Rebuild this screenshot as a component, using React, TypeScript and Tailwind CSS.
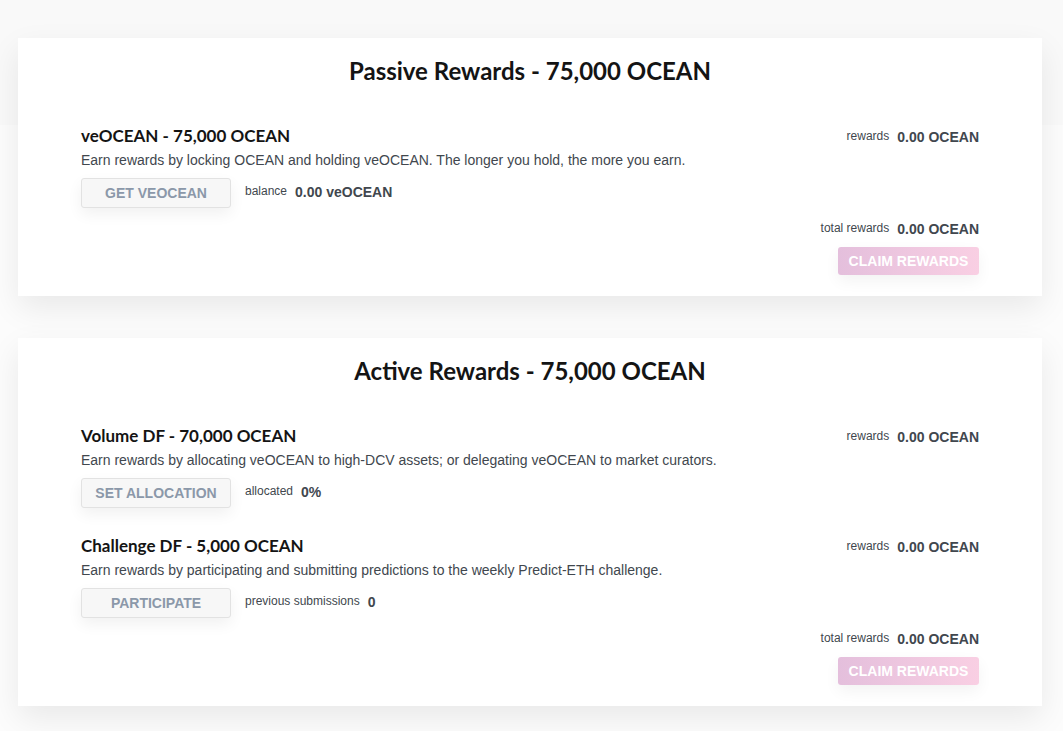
import React from 'react';

interface Stat {
    label: string;
    value: string;
}

interface Stream {
    title: string;
    description: string;
    action: string;
    stat: Stat;
    rewards: string;
}

interface Section {
    title: string;
    streams: Stream[];
    total: string;
}

const SECTIONS: Section[] = [
    {
        title: 'Passive Rewards - 75,000 OCEAN',
        streams: [
            {
                title: 'veOCEAN - 75,000 OCEAN',
                description: 'Earn rewards by locking OCEAN and holding veOCEAN. The longer you hold, the more you earn.',
                action: 'Get veOCEAN',
                stat: { label: 'balance', value: '0.00 veOCEAN' },
                rewards: '0.00 OCEAN',
            },
        ],
        total: '0.00 OCEAN',
    },
    {
        title: 'Active Rewards - 75,000 OCEAN',
        streams: [
            {
                title: 'Volume DF - 70,000 OCEAN',
                description: 'Earn rewards by allocating veOCEAN to high-DCV assets; or delegating veOCEAN to market curators.',
                action: 'Set Allocation',
                stat: { label: 'allocated', value: '0%' },
                rewards: '0.00 OCEAN',
            },
            {
                title: 'Challenge DF - 5,000 OCEAN',
                description: 'Earn rewards by participating and submitting predictions to the weekly Predict-ETH challenge.',
                action: 'Participate',
                stat: { label: 'previous submissions', value: '0' },
                rewards: '0.00 OCEAN',
            },
        ],
        total: '0.00 OCEAN',
    },
];

const headingFont = "font-['Lato','Inter',sans-serif]";

function StatLine({ label, value }: Stat) {
    return (
        <div className="flex items-start gap-2">
            <span className="text-[12px] leading-[18px] text-[#41474e]">{label}</span>
            <span className="text-[14px] font-bold leading-[20px] text-[#41474e]">{value}</span>
        </div>
    );
}

function StreamRow({ stream }: { stream: Stream }) {
    return (
        <div className="flex items-start justify-between">
            <div>
                <h3 className={`${headingFont} text-[17px] font-bold leading-[24px] text-[#141414]`}>{stream.title}</h3>
                <p className="mt-[2px] text-[14px] leading-[20px] text-[#41474e]">{stream.description}</p>
                <div className="mt-2 flex items-start gap-[14px]">
                    <button className="h-[30px] w-[150px] rounded-[3px] border border-[#e2e2e2] bg-[#f7f7f7] text-[14px] font-bold uppercase text-[#8b98a9] shadow-[0_6px_15px_rgba(0,0,0,0.06)]">
                        {stream.action}
                    </button>
                    <div className="pt-[4px]">
                        <StatLine {...stream.stat} />
                    </div>
                </div>
            </div>
            <div className="pt-[3px]">
                <StatLine label="rewards" value={stream.rewards} />
            </div>
        </div>
    );
}

function RewardsCard({ section }: { section: Section }) {
    return (
        <div className="bg-white px-[63px] pb-[21px] pt-[17px] shadow-[0_12px_30px_rgba(0,0,0,0.08)]">
            <h2 className={`${headingFont} text-center text-[24px] font-bold leading-[32px] text-[#141414]`}>{section.title}</h2>
            <div className="mt-[37px] flex flex-col gap-[26px]">
                {section.streams.map((stream) => (
                    <StreamRow key={stream.title} stream={stream} />
                ))}
            </div>
            <div className="mt-[11px] flex flex-col items-end">
                <StatLine label="total rewards" value={section.total} />
                <button className="mt-2 h-[28px] w-[141px] rounded-[3px] bg-[linear-gradient(90deg,#e4bfdc,#f9cfe3)] text-[14px] font-bold uppercase text-white shadow-[0_6px_15px_rgba(0,0,0,0.05)]">
                    Claim Rewards
                </button>
            </div>
        </div>
    );
}

export default function App() {
    return (
        <div className="min-h-[731px] bg-[linear-gradient(#f9f9f9_125px,#fcfcfc_125px)] pb-[30px] pl-[18px] pr-[21px] pt-[38px] font-['Liberation_Sans',Arial,sans-serif]">
            <div className="flex flex-col gap-[42px]">
                {SECTIONS.map((section) => (
                    <RewardsCard key={section.title} section={section} />
                ))}
            </div>
        </div>
    );
}
